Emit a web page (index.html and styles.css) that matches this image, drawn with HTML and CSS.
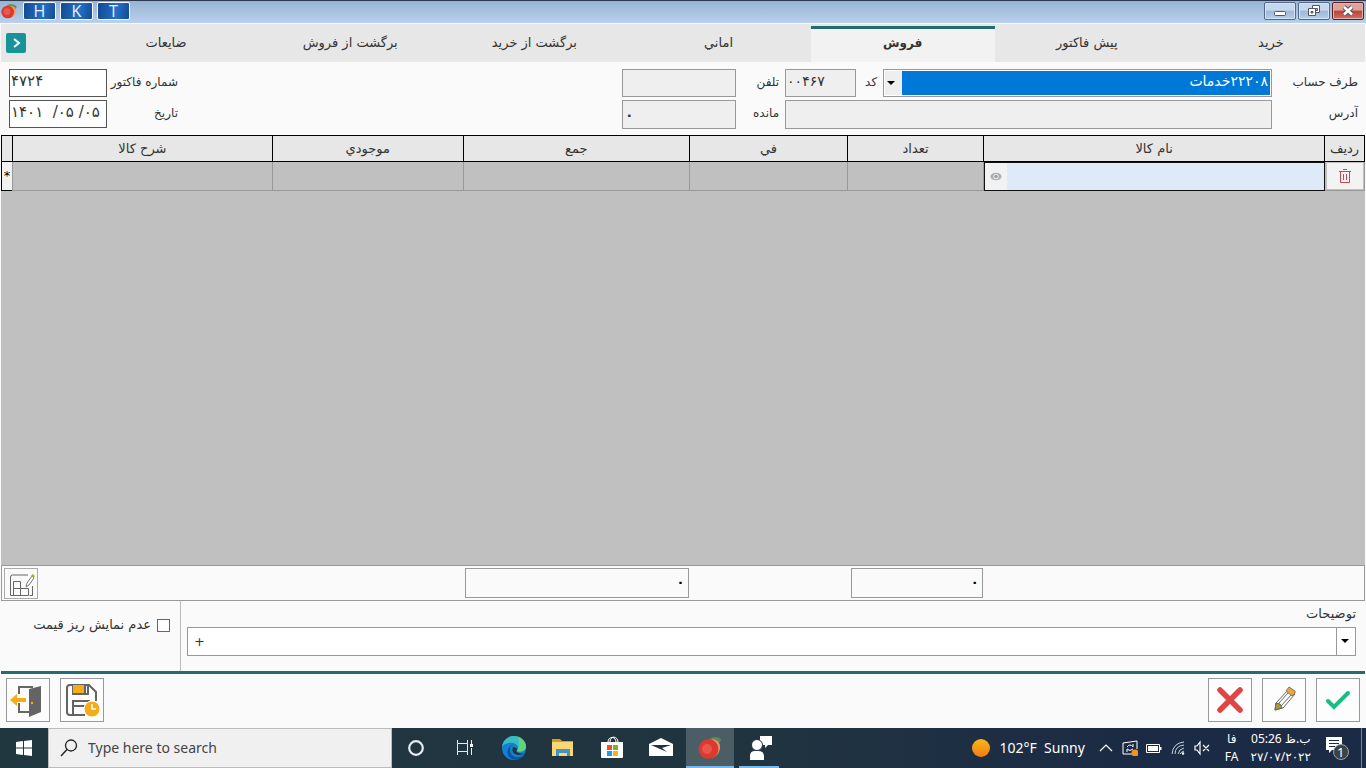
FILE: index.html
```html
<!DOCTYPE html>
<html lang="fa">
<head>
<meta charset="utf-8">
<title>فروش</title>
<link rel="stylesheet" href="styles.css">
</head>
<body>
<header class="titlebar">
  <svg class="fruit" viewBox="0 0 24 24" aria-hidden="true"><path d="M8 4Q14-1 23 4q1 3-1 5-4-5-9-3z" fill="#5f9455"/><path d="M14 4q9 1 8 10-2 8-9 9z" fill="#e9a05f"/><circle cx="10" cy="13.500" r="9.500" fill="#dc3a30"/><circle cx="9" cy="13" r="5" fill="#ea5a4c"/></svg>
  <button class="key">H</button>
  <button class="key">K</button>
  <button class="key">T</button>
  <div class="window-buttons">
    <button class="win" aria-label="Minimize"><svg viewBox="0 0 30 16"><rect x="9.500" y="8.500" width="11" height="4" rx="1" fill="#fff" stroke="#535666"/></svg></button>
    <button class="win" aria-label="Restore"><svg viewBox="0 0 30 16"><path d="M13.500 2.500h7v7h-7z" fill="#fff" stroke="#535666"/><path d="M16 5.500h2.500v2H16z" fill="#a9c1de" stroke="#535666"/><path d="M9.500 5.500h7v7h-7z" fill="#fff" stroke="#535666"/><path d="M12 8.500h2v1.500h-2z" fill="#a9c1de" stroke="#535666"/></svg></button>
    <button class="win close" aria-label="Close"><svg viewBox="0 0 30 16"><path d="M11 4l8 7.500M19 4l-8 7.500" stroke="#535666" stroke-width="4.500"/><path d="M11 4l8 7.500M19 4l-8 7.500" stroke="#fff" stroke-width="2.500"/></svg></button>
  </div>
</header>

<main class="app">
  <nav class="tabs" dir="rtl">
    <button class="tab">خريد</button>
    <button class="tab">پيش فاکتور</button>
    <button class="tab active">فروش</button>
    <button class="tab">اماني</button>
    <button class="tab">برگشت از خريد</button>
    <button class="tab">برگشت از فروش</button>
    <button class="tab">ضايعات</button>
    <div class="tabs-end"><button class="more" aria-label="بیشتر"><svg viewBox="0 0 20 20"><path d="M8 6l5 4-5 4" fill="none" stroke="#fff" stroke-width="2"/></svg></button></div>
  </nav>

  <form class="invoice">
    <input class="field editable" id="number" value="۴۷۲۴">
    <label for="number">شماره فاکتور</label>
    <span></span>
    <input class="field" id="phone" readonly>
    <label for="phone">تلفن</label>
    <input class="field" id="code" value="۰۰۴۶۷" readonly>
    <label for="code">کد</label>
    <div class="combo party">
      <select id="party" dir="rtl"><option>۲۲۲۰۸خدمات</option></select>
    </div>
    <label for="party">طرف حساب</label>

    <input class="field editable" id="date" value="۱۴۰۱  /۰۵ /۰۵">
    <label for="date">تاريخ</label>
    <span></span>
    <input class="field balance" id="balance" value="۰" readonly>
    <label for="balance">مانده</label>
    <input class="field address" id="address" readonly>
    <label for="address">آدرس</label>
  </form>

  <div class="sheet">
    <table class="items" dir="rtl">
      <colgroup><col class="c-row"><col class="c-name"><col class="c-count"><col class="c-price"><col class="c-sum"><col class="c-stock"><col><col class="c-mark"></colgroup>
      <thead><tr><th>رديف</th><th>نام کالا</th><th>تعداد</th><th>في</th><th>جمع</th><th>موجودي</th><th>شرح کالا</th><th></th></tr></thead>
      <tbody><tr>
        <td><button class="delete" aria-label="حذف"><svg viewBox="0 0 16 16"><path d="M2 3.500h12M6 1.500h4M3.500 4v10.500h9V4M6.500 6v6M9.500 6v6" fill="none" stroke="#c8474c"/></svg></button></td>
        <td class="current"><div class="name-cell"><input aria-label="نام کالا"><button class="peek" type="button" aria-label="نمایش"><svg viewBox="0 0 14 10"><ellipse cx="7" cy="5" rx="6.500" ry="4.500" fill="#aeb1b4"/><circle cx="7" cy="5" r="3" fill="#f2f3f4"/><circle cx="7" cy="5" r="2" fill="#9da0a4"/></svg></button></div></td>
        <td></td><td></td><td></td><td></td><td></td>
        <td class="mark">*</td>
      </tr></tbody>
    </table>
  </div>

  <section class="totals" dir="rtl">
    <output class="total count">۰</output>
    <output class="total sum">۰</output>
    <button class="layout" aria-label="چیدمان"><svg viewBox="0 0 32 29"><path d="M23 6H7.500q-2 0-2 2v18.500h18v-7h-15M8.500 26v-13.500h7v14M27.500 17v9.500h-3" fill="none" stroke="#666"/><path d="M21 18l1-4 5-7 2 2-5 7z" fill="#fff" stroke="#777"/><path d="M26 7l1.500-2 2.500 2-1.500 2z" fill="#a8ad35"/></svg></button>
  </section>

  <section class="notes">
    <label class="check"><span>عدم نمايش ريز قيمت</span><input type="checkbox"></label>
    <div class="description">
      <label for="description">توضيحات</label>
      <div class="combo"><select id="description"><option>+</option></select></div>
    </div>
  </section>

  <footer class="actions">
    <button class="action" aria-label="خروج"><svg viewBox="0 0 42 42"><path d="M12 15V8h14M12 24v9h14" fill="none" stroke="#666" stroke-width="2"/><path d="M22 10l12-3v26l-12 5z" fill="#646464"/><circle cx="25" cy="24" r="1.200" fill="#f5ac19"/><path d="M19 19v4h-9v4l-7-6 7-6v4z" fill="#f5ac19"/></svg></button>
    <button class="action" aria-label="ذخیره موقت"><svg viewBox="0 0 42 42"><path d="M24 36H9q-3 0-3-3V9q0-3 3-3h19l7 7v9M12 6v9h15V6M12 36V22h16v3M13 27h12" fill="none" stroke="#646464" stroke-width="2"/><path d="M12 6h11v8H12z" fill="#f5ac19"/><path d="M24 6v8" stroke="#646464" stroke-width="2"/><circle cx="31" cy="30" r="8" fill="#f5ac19" stroke="#fff"/><path d="M31 25v5h4" fill="none" stroke="#fff" stroke-width="1.500"/></svg></button>
    <span class="push"></span>
    <button class="action" aria-label="انصراف"><svg viewBox="0 0 42 42"><path d="M11 11l20 20M31 11L11 31" stroke="#df4545" stroke-width="5.500" stroke-linecap="round"/></svg></button>
    <button class="action" aria-label="ویرایش"><svg viewBox="0 0 42 42"><path d="M12 31l1-7 13-14 6 5-12 14z" fill="#fff" stroke="#666"/><path d="M15 25l11-12M18 27l11-12" stroke="#666"/><path d="M23 12l3-4 6 4v2l-3 3z" fill="#f0a62f" stroke="#777"/><path d="M12 31l1-7 4 1 2 4z" fill="#b09a35" stroke="#666"/></svg></button>
    <button class="action" aria-label="تایید"><svg viewBox="0 0 42 42"><path d="M11 22l6 6 14-14" fill="none" stroke="#1bbd83" stroke-width="4" stroke-linecap="round"/></svg></button>
  </footer>
</main>

<footer class="taskbar">
  <button class="start" aria-label="Start"><svg viewBox="0 0 16 16"><path d="M0 2l7-1v6.500H0zM8 .9L16 0v7.500H8zM0 8.500h7V15l-7-1zM8 8.500h8V16l-8-1z" fill="#fff"/></svg></button>
  <label class="search"><svg viewBox="0 0 18 18"><circle cx="11" cy="6.500" r="5.500" fill="none" stroke="#222" stroke-width="1.300"/><path d="M7 10.500L1 17" stroke="#222" stroke-width="1.400"/></svg><input placeholder="Type here to search" aria-label="Type here to search"></label>
  <div class="pins">
    <button class="pin" aria-label="Cortana"><svg viewBox="0 0 24 24"><circle cx="12" cy="12" r="6.800" fill="none" stroke="#e6edf0" stroke-width="2.200"/></svg></button>
    <button class="pin" aria-label="Task view"><svg viewBox="0 0 24 24"><path d="M4.500 4v3.500h10V4M4.500 19v-3.500h10V19M4.500 9.500v4M4.500 7.500v8M14.500 7.500v8M18.500 4v4M18.500 12v7" fill="none" stroke="#e6edf0"/><path d="M17 8h3v3h-3z" fill="#fff"/></svg></button>
    <button class="pin" aria-label="Edge"><svg viewBox="0 0 24 24"><circle cx="12" cy="12" r="12" fill="#1580d2"/><path d="M0 11C1 3 7 0 12 0c7 0 12 5 12 10 0 6-7 7-9 5 2-3 1-7-4-8C6 6 2 8 0 11z" fill="#38bdc1"/><path d="M16 1c5 2 8 6 8 10-1 5-7 5-9 4 2-2 3-8 1-14z" fill="#61d477"/><path d="M8 12c-1 8 6 11 13 8-4 6-13 4-15-1-2-5 2-11 6-10-3 0-4 2-4 3z" fill="#0d529e"/><path d="M11 11c-2 4 1 8 6 8 3 0 5-1 6-2-2 1-7 1-9-2 2-1 1-4-3-4z" fill="#203641"/></svg></button>
    <button class="pin" aria-label="File Explorer"><svg viewBox="0 0 24 24"><path d="M1 3h8l2 2h11v15H1z" fill="#d99a22"/><path d="M1 6h21v14H1z" fill="#f9d775"/><path d="M5 20v-7h14v7h-3v-3H8v3z" fill="#4492be"/></svg></button>
    <button class="pin" aria-label="Store"><svg viewBox="0 0 24 24"><path d="M8 6c0-6 8-6 8 0M10 6c0-7 8-6 8 0" fill="none" stroke="#fff"/><path d="M1 6h22v15q0 1-1 1H2q-1 0-1-1z" fill="#fff"/><path d="M7 9h5v5H7z" fill="#e9512b"/><path d="M13 9h5v5h-5z" fill="#7bb51b"/><path d="M7 15h5v5H7z" fill="#1b9fe0"/><path d="M13 15h5v5h-5z" fill="#f6b60b"/></svg></button>
    <button class="pin" aria-label="Mail"><svg viewBox="0 0 24 24"><path d="M0 8l12-6 12 6v12H0z" fill="#fff"/><path d="M2 9h20l-9 3 5 4-7-3z" fill="#22323e"/></svg></button>
    <button class="pin running focused" aria-label="Invoices"><svg viewBox="0 0 24 24"><path d="M11 3q7-4 12 0-1 5-4 5-4-4-8-2z" fill="#618858"/><path d="M14 3q9 1 8 10-2 8-9 9z" fill="#df9a64"/><circle cx="10.500" cy="13" r="10" fill="#dc3a30"/><circle cx="9" cy="13" r="5" fill="#ea564a"/></svg></button>
    <button class="pin running" aria-label="Remote help"><svg viewBox="0 0 24 24"><path d="M13 0h12v9h-4l-3 3V9h-5z" fill="#fff"/><circle cx="10" cy="9" r="5.500" fill="#fff" stroke="#20303f"/><path d="M3 24v-4q0-5 5-5h3q6 0 6 5v4z" fill="#fff"/></svg></button>
  </div>
  <div class="tray">
    <svg class="sun" viewBox="0 0 18 18"><defs><linearGradient id="sun" x2="0" y2="1"><stop stop-color="#fcb716"/><stop offset="1" stop-color="#ee7c18"/></linearGradient></defs><circle cx="9" cy="9" r="9" fill="url(#sun)"/></svg>
    <span class="weather">102°F&nbsp; Sunny</span>
    <div class="tray-icons">
      <svg viewBox="0 0 16 16"><path d="M2 11l6-6 6 6" fill="none" stroke="#fff" stroke-width="1.200"/></svg>
      <svg viewBox="0 0 16 16"><path d="M1 3l14-2v8M10 14H1V3M5 7q3-4 6 0V4M11 9q-3 3-6 0v3" fill="none" stroke="#fff"/><circle cx="13" cy="13" r="3.500" fill="#f29220"/></svg>
      <svg viewBox="0 0 16 16"><path d="M.5 4.500h13v8H.5z" fill="none" stroke="#fff"/><path d="M2 6h10v5H2zM14 7h1.500v3H14z" fill="#fff"/></svg>
      <svg viewBox="0 0 16 16"><path d="M2 14Q3 3 14 2M5 14Q5 6 14 5M8 14q1-5 6-6M10 14q1-2 4-3" fill="none" stroke="#cdd4db"/><circle cx="13" cy="13.500" r="1.200" fill="#fff"/></svg>
      <svg viewBox="0 0 16 16"><path d="M1 6h2l3-4v12l-3-4H1zM9 5l6 6M15 5l-6 6" fill="none" stroke="#fff" stroke-width="1.200"/></svg>
    </div>
    <div class="two-line lang"><span>فا</span><span>FA</span></div>
    <div class="two-line clock"><span dir="rtl">ب.ظ 05:26</span><span>٢٧/٠٧/٢٠٢٢</span></div>
    <button class="notify" aria-label="Notifications"><svg viewBox="0 0 24 26"><path d="M1 2h16v13H7l-3 3v-3H1z" fill="#fff"/><path d="M4 5.500h10M4 8.500h10M4 11.500h6" stroke="#1b2a45"/><circle cx="16" cy="17" r="7.500" fill="#3a4147" stroke="#9ba3ab"/></svg><span class="badge">1</span></button>
  </div>
</footer>
</body>
</html>
```
FILE: styles.css
```css
* { box-sizing: border-box; }

body {
  margin: 0;
  min-height: 100vh;
  display: flex;
  flex-direction: column;
  background: #fafafa;
  color: #333;
  font: 13px/20px "DejaVu Sans", sans-serif;
}

button, input, select { font: inherit; color: inherit; }
button { padding: 0; border: 0; background: none; }
svg { display: block; }

/* Title bar */
.titlebar {
  display: flex;
  align-items: flex-start;
  height: 24px;
  padding: 1px 2px 0 1px;
  border-top: 1px solid #2b3a52;
  border-bottom: 1px solid #f5fafa;
  background: linear-gradient(#98b4d2, #b9d0ee);
}
.fruit { width: 16px; height: 16px; margin: 1px 6px 0 0; }
.key {
  width: 33px;
  height: 18px;
  margin-right: 4px;
  border: 1px solid #f4f8fc;
  border-radius: 2px;
  background: linear-gradient(100deg, #134a91, #2370c8 60%, #134a91);
  color: #e8f4ff;
  font: 16px/16px "Open Sans", sans-serif;
}
.window-buttons { display: flex; gap: 2px; margin-left: auto; }
.win {
  width: 32px;
  height: 18px;
  border: 1px solid #53698b;
  border-radius: 2px;
  background: linear-gradient(#c6d8ed 45%, #9db9da 50%, #b4cde9);
  box-shadow: inset 0 0 0 1px #d4e4f5;
}
.win svg { width: 30px; height: 16px; }
.close {
  border-color: #5a2028;
  background: linear-gradient(#dfa198 45%, #bb4335 50%, #cf7363);
  box-shadow: inset 0 0 0 1px #e3b1aa;
}

.app {
  flex: 1;
  display: flex;
  flex-direction: column;
  padding: 0 1px;
}

/* Tabs */
.tabs {
  display: flex;
  align-items: flex-end;
  height: 38px;
  padding-right: 2px;
  background: #e7e7e7;
}
.tab { flex: 1; height: 36px; padding-bottom: 2px; }
.tab.active {
  padding-bottom: 6px;
  border-top: 3px solid #226c70;
  background: #f2f2f2;
  font-size: 12px;
  font-weight: bold;
}
.tabs-end {
  width: 73px;
  height: 38px;
  display: flex;
  align-items: center;
  justify-content: flex-end;
  padding-left: 5px;
}
.more { width: 20px; height: 20px; border-radius: 2px; background: #16949a; }

/* Invoice header */
.invoice {
  display: grid;
  grid-template-columns: 98px 65px 10fr 114px 37px 71px 15px 9fr 80px;
  gap: 3px 6px;
  padding: 7px 7px 6px 8px;
}
.invoice label {
  direction: rtl;
  padding-top: 3px;
  white-space: nowrap;
  font-size: 12px;
}
.field {
  width: 100%;
  height: 28px;
  padding: 0 1px 4px;
  border: 1px solid #999;
  border-radius: 0;
  background: #efefef;
  font-size: 14px;
}
.field.editable { border-color: #555; background: #fff; font-size: 15px; }
.field.balance { height: 29px; padding: 0 2px; font-weight: bold; }
.address { grid-column: span 3; height: 29px; }

.combo { position: relative; display: flex; }
.combo select {
  width: 100%;
  height: 29px;
  padding: 0 6px;
  border: 1px solid #999;
  border-radius: 0;
  appearance: none;
  background: #fff;
}
.combo::before {
  content: "";
  position: absolute;
  inset: 1px 19px 1px auto;
  border-left: 1px solid #999;
  pointer-events: none;
}
.combo::after {
  content: "";
  position: absolute;
  right: 7px;
  top: 12px;
  border: 4px solid transparent;
  border-top-color: #000;
  border-bottom: 0;
  pointer-events: none;
}
.party select {
  height: 28px;
  padding: 0 3px 4px 20px;
  background: linear-gradient(90deg, #eee 18px, #0078d7 18px);
  box-shadow: inset 0 0 0 1px #fff;
  color: #fff;
  font-size: 14px;
}
.party::before { display: none; }
.party::after { right: auto; left: 4px; }

/* Item grid */
.sheet { flex: 1; background: #c0c0c0; }
.items {
  width: 100%;
  table-layout: fixed;
  border-collapse: collapse;
}
.c-row { width: 40px; }
.c-mark { width: 11px; }
.c-name { width: 25%; }
.c-count { width: 10%; }
.c-price { width: 11.6%; }
.c-sum { width: 16.6%; }
.c-stock { width: 14%; }
.items th {
  height: 26px;
  padding: 0;
  border: 1px solid #000;
  background: #e7e7e7;
  font-weight: normal;
}
.items td { height: 29px; padding: 0; border: 1px solid #999; }
.items td.current { outline: 1px solid #111; outline-offset: -1px; background: #deeaf8; }
.items td.mark { border: 1px solid #000; background: #f2f2f2; color: #000; text-align: center; }
.name-cell { display: flex; height: 28px; }
.name-cell input { flex: 1; min-width: 0; border: 0; background: none; }
.peek { display: grid; place-items: center; width: 23px; background: #f0f2f4; }
.peek svg { width: 12px; height: 9px; }
.delete { display: grid; place-items: center; width: 36px; height: 26px; margin: 0 auto; background: #f3f3f3; }
.delete svg { width: 16px; height: 16px; }

/* Totals */
.totals {
  display: grid;
  grid-template-columns: 39px 340fr 136fr 158fr 227fr 190fr 260fr 11px;
  align-items: center;
  height: 36px;
  border: 1px solid #999;
}
.total {
  height: 30px;
  margin: 0 2px;
  padding: 4px 3px 0;
  border: 1px solid #999;
  color: #000;
  font-weight: bold;
}
.count { grid-column: 3; }
.sum { grid-column: 5; }
.layout {
  grid-column: 7 / 9;
  justify-self: end;
  width: 34px;
  height: 31px;
  margin-left: 2px;
  border: 1px solid #aaa;
}
.layout svg { width: 32px; height: 29px; }

/* Notes */
.notes { display: flex; height: 70px; }
.check {
  display: flex;
  justify-content: flex-end;
  gap: 6px;
  width: 180px;
  padding: 14px 10px 0 0;
  border-right: 1px solid #bbb;
}
.check span { direction: rtl; white-space: nowrap; }
.check input {
  width: 13px;
  height: 13px;
  margin: 4px 0 0;
  border: 1px solid #666;
  appearance: none;
  background: #fff;
}
.description { flex: 1; padding: 3px 9px 0 6px; }
.description label { display: block; height: 23px; direction: rtl; }

/* Actions */
.actions {
  display: flex;
  gap: 10px;
  height: 57px;
  padding: 4px 5px;
  border-top: 3px solid #256b73;
}
.action { width: 44px; height: 44px; border: 1px solid #999; background: #fdfdfd; }
.action svg { width: 42px; height: 42px; }
.push { flex: 1; }

/* Taskbar */
.taskbar {
  display: flex;
  height: 40px;
  background: linear-gradient(90deg, #203740, #203440 55%, #1b2a45 85%);
  color: #fff;
  font: 14px/20px "Noto Sans", "DejaVu Sans", sans-serif;
}
.start { display: grid; place-items: center; width: 48px; }
.start svg { width: 16px; height: 16px; }
.search {
  display: flex;
  align-items: center;
  width: 344px;
  padding-left: 11px;
  border: 1px solid #bbb;
  background: #f0f0f0;
}
.search svg { width: 18px; height: 18px; }
.search input { flex: 1; min-width: 0; padding: 0 10px; border: 0; background: none; color: #444; }
.search input::placeholder { color: #444; opacity: 1; }
.pins { display: flex; gap: 1px; }
.pin { display: grid; place-items: center; width: 48px; }
.pin svg { width: 24px; height: 24px; overflow: visible; }
.running { background: linear-gradient(#76b9ed, #76b9ed) center bottom / 40px 2px no-repeat; }
.focused { background-color: #4b5e66; background-size: 48px 2px; }
.tray { display: flex; align-items: center; margin-left: auto; padding-right: 4px; }
.sun { width: 18px; height: 18px; margin-right: 10px; }
.weather { white-space: nowrap; }
.tray-icons { display: flex; gap: 8px; margin: 0 15px 0 13px; }
.tray-icons svg { width: 16px; height: 16px; }
.two-line { display: flex; flex-direction: column; align-items: center; font-size: 12px; line-height: 18px; white-space: nowrap; }
.clock { margin: 0 14px 0 12px; }
.notify {
  position: relative;
  width: 28px;
  height: 26px;
  padding-right: 4px;
  margin-right: 8px;
  font-size: 13px;
}
.notify svg { width: 24px; height: 26px; }
.badge { position: absolute; left: 12px; top: 7px; }
.tray::after { content: ""; align-self: stretch; border-left: 1px solid #7b8798; }
```
